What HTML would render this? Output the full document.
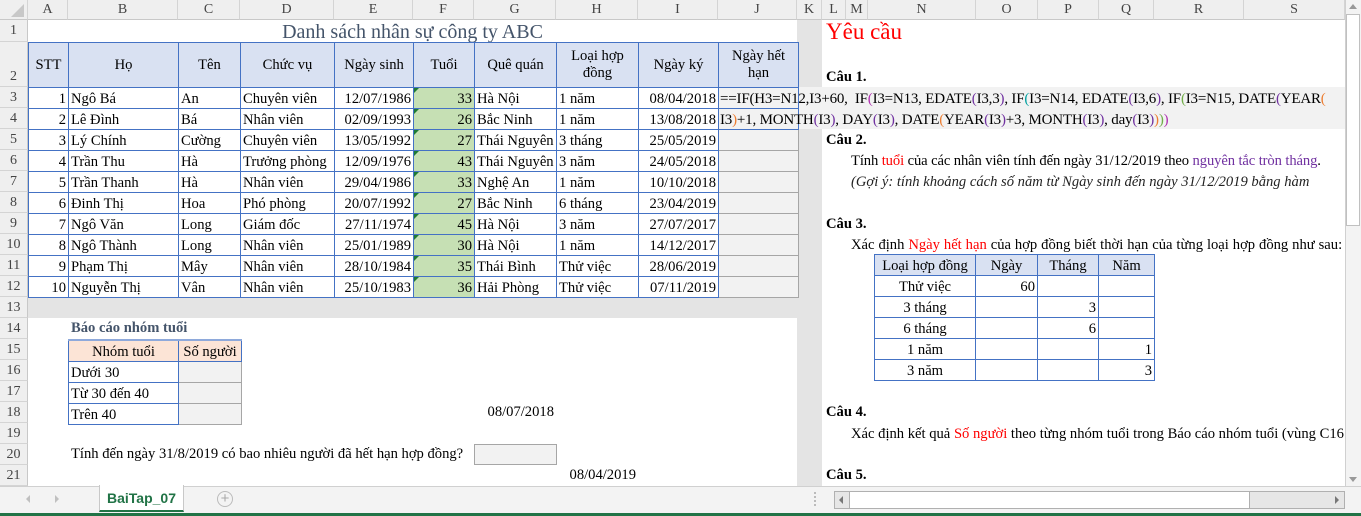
<!DOCTYPE html>
<html><head><meta charset="utf-8">
<style>
*{margin:0;padding:0;box-sizing:border-box}
body{width:1361px;height:516px;overflow:hidden;background:#fff;position:relative;font-family:"Liberation Serif",serif;font-size:14.6px;color:#000}
.a{position:absolute;white-space:nowrap}
.ch{position:absolute;top:0;height:20px;background:#efefef;border-right:1px solid #d4d4d4;border-bottom:1px solid #c8c8c8;text-align:center;line-height:20px;font-size:14px;color:#444}
.rh{position:absolute;left:0;width:28px;background:#efefef;border-right:1px solid #c8c8c8;border-bottom:1px solid #d4d4d4;text-align:center;font-size:14px;color:#444;display:flex;align-items:center;justify-content:center;padding-top:1px}
table{position:absolute;border-collapse:collapse;table-layout:fixed}
td{border:1px solid #4472c4;height:21px;padding:2px 2px 0;white-space:nowrap;overflow:hidden;font-size:14.6px;line-height:18px}
.r{text-align:right}.c{text-align:center}
.g{background:#c6e0b4;position:relative}
.g:before{content:"";position:absolute;left:0;top:0;border-top:5px solid #1e7b34;border-right:5px solid transparent}
.j{background:#f2f2f2;border-color:#a6a6a6 #a6a6a6 #a6a6a6 #4472c4}
.hd td{background:#d9e1f2;text-align:center;height:45px;line-height:17px;padding-top:0}
b{font-weight:bold}
</style></head><body>
<div class="ch" style="left:0;width:28px"><svg width="28" height="20"><polygon points="24,4 24,17 11,17" fill="#c8c8c8"/></svg></div>
<div class="ch" style="left:28px;width:40px">A</div>
<div class="ch" style="left:68px;width:110px">B</div>
<div class="ch" style="left:178px;width:62px">C</div>
<div class="ch" style="left:240px;width:94px">D</div>
<div class="ch" style="left:334px;width:79px">E</div>
<div class="ch" style="left:413px;width:61px">F</div>
<div class="ch" style="left:474px;width:82px">G</div>
<div class="ch" style="left:556px;width:82px">H</div>
<div class="ch" style="left:638px;width:80px">I</div>
<div class="ch" style="left:718px;width:79px">J</div>
<div class="ch" style="left:797px;width:25px">K</div>
<div class="ch" style="left:822px;width:24px">L</div>
<div class="ch" style="left:846px;width:22px">M</div>
<div class="ch" style="left:868px;width:108px">N</div>
<div class="ch" style="left:976px;width:62px">O</div>
<div class="ch" style="left:1038px;width:61px">P</div>
<div class="ch" style="left:1099px;width:55px">Q</div>
<div class="ch" style="left:1154px;width:90px">R</div>
<div class="ch" style="left:1244px;width:101px">S</div>
<div class="rh" style="top:20px;height:22px">1</div>
<div class="rh" style="top:42px;height:45px;align-items:flex-end;padding-bottom:1px">2</div>
<div class="rh" style="top:87px;height:21px">3</div>
<div class="rh" style="top:108px;height:21px">4</div>
<div class="rh" style="top:129px;height:21px">5</div>
<div class="rh" style="top:150px;height:21px">6</div>
<div class="rh" style="top:171px;height:21px">7</div>
<div class="rh" style="top:192px;height:21px">8</div>
<div class="rh" style="top:213px;height:21px">9</div>
<div class="rh" style="top:234px;height:21px">10</div>
<div class="rh" style="top:255px;height:21px">11</div>
<div class="rh" style="top:276px;height:21px">12</div>
<div class="rh" style="top:297px;height:21px">13</div>
<div class="rh" style="top:318px;height:21px">14</div>
<div class="rh" style="top:339px;height:21px">15</div>
<div class="rh" style="top:360px;height:21px">16</div>
<div class="rh" style="top:381px;height:21px">17</div>
<div class="rh" style="top:402px;height:21px">18</div>
<div class="rh" style="top:423px;height:21px">19</div>
<div class="rh" style="top:444px;height:21px">20</div>
<div class="rh" style="top:465px;height:21px">21</div>

<div class="a" style="left:797px;top:20px;width:25px;height:466px;background:#e4e4e4"></div>
<div class="a" style="left:28px;top:297px;width:769px;height:21px;background:#e4e4e4"></div>
<div class="a" style="left:718px;top:87px;width:627px;height:42px;background:#f2f2f2"></div>

<div class="a" style="left:28px;top:20px;width:769px;height:22px;text-align:center;font-size:20px;line-height:24px;color:#44546a">Danh sách nhân sự công ty ABC</div>

<table style="left:28px;top:42px;width:770px">
<colgroup><col style="width:40px"><col style="width:110px"><col style="width:62px"><col style="width:94px"><col style="width:79px"><col style="width:61px"><col style="width:82px"><col style="width:82px"><col style="width:80px"><col style="width:80px"></colgroup>
<tr class="hd"><td>STT</td><td>Họ</td><td>Tên</td><td>Chức vụ</td><td>Ngày sinh</td><td>Tuổi</td><td>Quê quán</td><td>Loại hợp<br>đồng</td><td>Ngày ký</td><td style="white-space:normal">Ngày hết<br>hạn</td></tr>
<tr><td class="r">1</td><td>Ngô Bá</td><td>An</td><td>Chuyên viên</td><td class="r">12/07/1986</td><td class="r g">33</td><td>Hà Nội</td><td>1 năm</td><td class="r">08/04/2018</td><td style="background:#f2f2f2"></td></tr>
<tr><td class="r">2</td><td>Lê Đình</td><td>Bá</td><td>Nhân viên</td><td class="r">02/09/1993</td><td class="r g">26</td><td>Bắc Ninh</td><td>1 năm</td><td class="r">13/08/2018</td><td style="background:#f2f2f2"></td></tr>
<tr><td class="r">3</td><td>Lý Chính</td><td>Cường</td><td>Chuyên viên</td><td class="r">13/05/1992</td><td class="r g">27</td><td>Thái Nguyên</td><td>3 tháng</td><td class="r">25/05/2019</td><td class="j"></td></tr>
<tr><td class="r">4</td><td>Trần Thu</td><td>Hà</td><td>Trưởng phòng</td><td class="r">12/09/1976</td><td class="r g">43</td><td>Thái Nguyên</td><td>3 năm</td><td class="r">24/05/2018</td><td class="j"></td></tr>
<tr><td class="r">5</td><td>Trần Thanh</td><td>Hà</td><td>Nhân viên</td><td class="r">29/04/1986</td><td class="r g">33</td><td>Nghệ An</td><td>1 năm</td><td class="r">10/10/2018</td><td class="j"></td></tr>
<tr><td class="r">6</td><td>Đinh Thị</td><td>Hoa</td><td>Phó phòng</td><td class="r">20/07/1992</td><td class="r g">27</td><td>Bắc Ninh</td><td>6 tháng</td><td class="r">23/04/2019</td><td class="j"></td></tr>
<tr><td class="r">7</td><td>Ngô Văn</td><td>Long</td><td>Giám đốc</td><td class="r">27/11/1974</td><td class="r g">45</td><td>Hà Nội</td><td>3 năm</td><td class="r">27/07/2017</td><td class="j"></td></tr>
<tr><td class="r">8</td><td>Ngô Thành</td><td>Long</td><td>Nhân viên</td><td class="r">25/01/1989</td><td class="r g">30</td><td>Hà Nội</td><td>1 năm</td><td class="r">14/12/2017</td><td class="j"></td></tr>
<tr><td class="r">9</td><td>Phạm Thị</td><td>Mây</td><td>Nhân viên</td><td class="r">28/10/1984</td><td class="r g">35</td><td>Thái Bình</td><td>Thử việc</td><td class="r">28/06/2019</td><td class="j"></td></tr>
<tr><td class="r">10</td><td>Nguyễn Thị</td><td>Vân</td><td>Nhân viên</td><td class="r">25/10/1983</td><td class="r g">36</td><td>Hải Phòng</td><td>Thử việc</td><td class="r">07/11/2019</td><td class="j"></td></tr>
</table>

<div class="a" style="left:720px;top:89px;font-size:15px;line-height:20px;letter-spacing:-0.2px">==IF(H3=N12,I3+60,&nbsp; IF<span style="color:#b030b0">(</span>I3=N13, EDATE<span style="color:#7030a0">(</span>I3,3<span style="color:#7030a0">)</span>, IF<span style="color:#00a0a0">(</span>I3=N14, EDATE<span style="color:#7030a0">(</span>I3,6<span style="color:#7030a0">)</span>, IF<span style="color:#70ad47">(</span>I3=N15, DATE<span style="color:#7030a0">(</span>YEAR<span style="color:#ed7d31">(</span></div>
<div class="a" style="left:720px;top:110px;font-size:15px;line-height:20px;letter-spacing:-0.2px">I3<span style="color:#ed7d31">)</span>+1, MONTH<span style="color:#7030a0">(</span>I3<span style="color:#7030a0">)</span>, DAY<span style="color:#7030a0">(</span>I3<span style="color:#7030a0">)</span>, DATE<span style="color:#ed7d31">(</span>YEAR<span style="color:#7030a0">(</span>I3<span style="color:#7030a0">)</span>+3, MONTH<span style="color:#7030a0">(</span>I3<span style="color:#7030a0">)</span>, day<span style="color:#7030a0">(</span>I3<span style="color:#7030a0">)</span><span style="color:#ed7d31">)</span><span style="color:#70ad47">)</span><span style="color:#b030b0">)</span></div>

<div class="a" style="left:826px;top:19px;font-size:23px;color:#ff0000">Yêu cầu</div>
<div class="a" style="left:826px;top:69px"><b>Câu 1.</b></div>
<div class="a" style="left:826px;top:132px"><b>Câu 2.</b></div>
<div class="a" style="left:851px;top:153px;letter-spacing:-0.1px">Tính <span style="color:#ff0000">tuổi</span> của các nhân viên tính đến ngày 31/12/2019 theo <span style="color:#7030a0">nguyên tắc tròn tháng</span>.</div>
<div class="a" style="left:851px;top:174px;font-style:italic;color:#222">(Gợi ý: tính khoảng cách số năm từ Ngày sinh đến ngày 31/12/2019 bằng hàm</div>
<div class="a" style="left:826px;top:216px"><b>Câu 3.</b></div>
<div class="a" style="left:851px;top:237px;word-spacing:0.3px">Xác định <span style="color:#ff0000">Ngày hết hạn</span> của hợp đồng biết thời hạn của từng loại hợp đồng như sau:</div>
<table style="left:874px;top:254px;width:280px">
<colgroup><col style="width:101px"><col style="width:62px"><col style="width:61px"><col style="width:56px"></colgroup>
<tr style="background:#d9e1f2"><td class="c">Loại hợp đồng</td><td class="c">Ngày</td><td class="c">Tháng</td><td class="c">Năm</td></tr>
<tr><td class="c">Thử việc</td><td class="r">60</td><td></td><td></td></tr>
<tr><td class="c">3 tháng</td><td></td><td class="r">3</td><td></td></tr>
<tr><td class="c">6 tháng</td><td></td><td class="r">6</td><td></td></tr>
<tr><td class="c">1 năm</td><td></td><td></td><td class="r">1</td></tr>
<tr><td class="c">3 năm</td><td></td><td></td><td class="r">3</td></tr>
</table>
<div class="a" style="left:826px;top:404px"><b>Câu 4.</b></div>
<div class="a" style="left:851px;top:426px">Xác định kết quả <span style="color:#ff0000">Số người</span> theo từng nhóm tuổi trong Báo cáo nhóm tuổi (vùng C16:</div>
<div class="a" style="left:826px;top:467px"><b>Câu 5.</b></div>

<div class="a" style="left:71px;top:320px;font-weight:bold;color:#44546a;font-size:14.6px">Báo cáo nhóm tuổi</div>
<table style="left:68px;top:339px;width:173px">
<colgroup><col style="width:110px"><col style="width:63px"></colgroup>
<tr><td class="c" style="background:#fce4d6;border-top:2px solid #8ea9db">Nhóm tuổi</td><td class="c" style="background:#fce4d6;border-top:2px solid #8ea9db">Số người</td></tr>
<tr><td>Dưới 30</td><td class="j"></td></tr>
<tr><td>Từ 30 đến 40</td><td class="j"></td></tr>
<tr><td>Trên 40</td><td class="j"></td></tr>
</table>
<div class="a" style="left:470px;top:404px;width:84px;text-align:right">08/07/2018</div>
<div class="a" style="left:71px;top:446px">Tính đến ngày 31/8/2019 có bao nhiêu người đã hết hạn hợp đồng?</div>
<div class="a" style="left:474px;top:444px;width:83px;height:21px;background:#f2f2f2;border:1px solid #a6a6a6"></div>
<div class="a" style="left:552px;top:467px;width:84px;text-align:right">08/04/2019</div>

<div class="a" style="left:1345px;top:0;width:16px;height:486px;background:#f3f3f3;border-left:1px solid #d0d0d0"></div>
<div class="a" style="left:1346px;top:14px;width:14px;height:212px;background:#fff;border:1px solid #c0c0c0"></div>
<div class="a" style="left:1349px;top:4px;width:0;height:0;border-left:4px solid transparent;border-right:4px solid transparent;border-bottom:5px solid #999"></div>
<div class="a" style="left:1349px;top:477px;width:0;height:0;border-left:4px solid transparent;border-right:4px solid transparent;border-top:5px solid #999"></div>

<div class="a" style="left:0;top:486px;width:1361px;height:27px;background:#f3f3f3;border-top:1px solid #d0d0d0"></div>
<div class="a" style="left:26px;top:495px;width:0;height:0;border-top:4px solid transparent;border-bottom:4px solid transparent;border-right:4px solid #c0c0c0"></div>
<div class="a" style="left:55px;top:495px;width:0;height:0;border-top:4px solid transparent;border-bottom:4px solid transparent;border-left:4px solid #c0c0c0"></div>
<div class="a" style="left:99px;top:485px;width:85px;height:27px;background:#fff;border:1px solid #c8c8c8;border-top:none;border-bottom:2px solid #217346;text-align:center;font-family:'Liberation Sans',sans-serif;font-weight:bold;color:#217346;font-size:14px;line-height:26px">BaiTap_07</div>
<div class="a" style="left:217px;top:491px;width:16px;height:16px;border:1px solid #bbb;border-radius:50%;text-align:center;line-height:13px;color:#aaa;font-family:'Liberation Sans',sans-serif;font-size:15px">+</div>
<div class="a" style="left:814px;top:492px;width:2px;height:14px;border-left:2px dotted #bbb"></div>
<div class="a" style="left:834px;top:491px;width:511px;height:18px;background:#e6e6e6;border:1px solid #b0b0b0"></div>
<div class="a" style="left:849px;top:492px;width:401px;height:16px;background:#fff;border-right:1px solid #b0b0b0;border-left:1px solid #b0b0b0"></div>
<div class="a" style="left:839px;top:496px;width:0;height:0;border-top:4px solid transparent;border-bottom:4px solid transparent;border-right:4px solid #777"></div>
<div class="a" style="left:1335px;top:496px;width:0;height:0;border-top:4px solid transparent;border-bottom:4px solid transparent;border-left:4px solid #777"></div>
<div class="a" style="left:0;top:513px;width:1361px;height:3px;background:#217346"></div>
</body></html>
